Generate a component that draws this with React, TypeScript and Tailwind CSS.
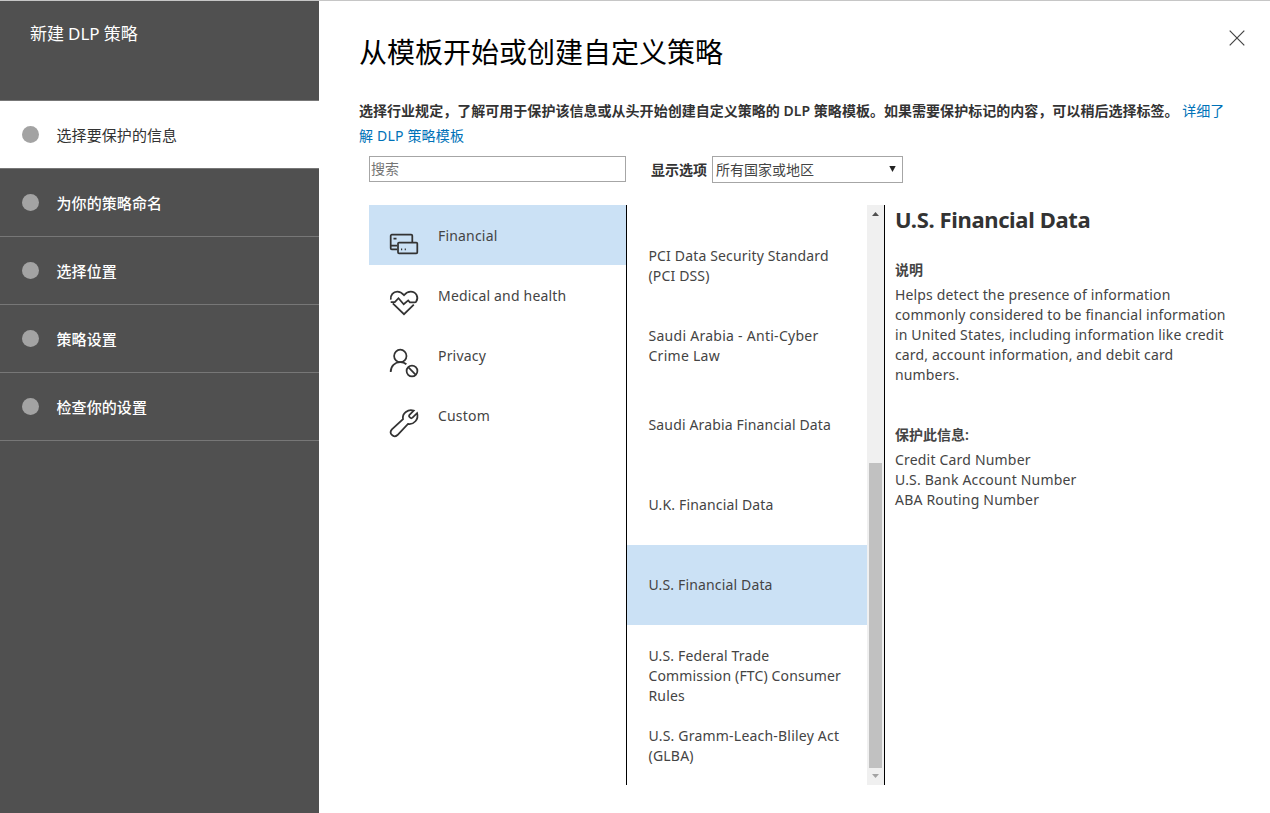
import type { ReactNode } from "react";

const steps = ["选择要保护的信息", "为你的策略命名", "选择位置", "策略设置", "检查你的设置"];

const icons: Record<string, ReactNode> = {
  Financial: (
    <>
      <path d="M22.3 12V5.8a1.100 1.100 0 0 0-1.100-1.100H1.800A1.100 1.100 0 0 0 .7 5.800v12.400a1.100 1.100 0 0 0 1.100 1.100H7M.7 15.700H7M3.500 8.500h3" />
      <rect x="8" y="12.500" width="19.300" height="10.800" rx="1" />
      <path d="M11 19.300h1.200M14.700 19.300h1.200" />
    </>
  ),
  "Medical and health": (
    <>
      <path d="M.8 9.600C.2 5 3.400 1.700 7.200 1.700 10 1.700 11.900 2.800 14 5.200c2-2.400 3.900-3.500 6.800-3.500 5.300 0 8.300 5.600 5.400 9.900-.4.500-.8.700-1.400.700H19.900l-1.700-1.900-4.500 3.800-5.200-6-3.700 4H.7" />
      <path d="M2.800 13.300 14 24.200l9.800-9.500" />
    </>
  ),
  Privacy: (
    <>
      <circle cx="10.300" cy="5.900" r="6.200" />
      <path d="M.7 21.900c0-5.700 4.100-9.700 9.600-9.700 2.600 0 4.400.7 6.100 2" />
      <circle cx="22" cy="21" r="5.400" />
      <path d="m18.200 17.200 7.600 7.600" />
    </>
  ),
  Custom: (
    <path d="M23.700.7c-5.600-1.900-11.800 2.700-10.700 8.500L1.900 19.300c-3.500 4 1.600 9.200 5.600 5.700L18 13.900c5.800.9 11-4.500 9.100-10.700l-4.600 4.500c-.7.600-1.700.600-2.300 0l-.7-.7c-.6-.6-.6-1.500 0-2.100z" />
  ),
};

const categories = ["Financial", "Medical and health", "Privacy", "Custom"];

const templates = [
  { text: "PCI Data Security Standard (PCI DSS)", pad: "pt-[21px]" },
  { text: "Saudi Arabia - Anti-Cyber Crime Law", pad: "pt-[21px] tracking-[0.270px]" },
  { text: "Saudi Arabia Financial Data", pad: "pt-[30px]" },
  { text: "U.K. Financial Data", pad: "pt-[30px]" },
  { text: "U.S. Financial Data", pad: "pt-[30px]", active: true },
  { text: "U.S. Federal Trade Commission (FTC) Consumer Rules", pad: "pt-[21px]" },
  { text: "U.S. Gramm-Leach-Bliley Act (GLBA)", pad: "pt-[21px] tracking-[0.210px]" },
];

function Sidebar() {
  return (
    <aside className="w-[319px] shrink-0 bg-[#505050] text-white">
      <div className="h-[100px] border-b border-[#777] pt-[21px] pl-[30px] text-[17px] leading-[24px] tracking-[-0.100px]">新建 DLP 策略</div>
      {steps.map((step, i) => (
        <div
          key={step}
          className={`flex h-[68px] items-center border-b border-[#777] pl-[22px] text-[15px] tracking-[0.080px] ${
            i === 0 ? "bg-white text-[#333]" : "font-medium"
          }`}
        >
          <span className="mr-[17.500px] size-[17px] rounded-full bg-[#a3a3a3]" />
          <span className="pt-[2px]">{step}</span>
        </div>
      ))}
    </aside>
  );
}

function Categories() {
  return (
    <div className="w-[257px]">
      {categories.map((name, i) => (
        <div key={name} className={`flex h-[60px] pl-[21px] ${i === 0 ? "bg-[#cbe1f5]" : ""}`}>
          <svg
            className="mt-[25px] size-[28px] overflow-visible"
            viewBox="0 0 28 28"
            fill="none"
            stroke="#333"
            strokeWidth="1.750"
          >
            {icons[name]}
          </svg>
          <span className="ml-[20px] pt-[21px] leading-[20px] tracking-[0.180px]">{name}</span>
        </div>
      ))}
    </div>
  );
}

function Templates() {
  return (
    <div className="flex w-[259px] border-x border-black">
      <div className="w-[240px] pt-[20px]">
        {templates.map((t) => (
          <div
            key={t.text}
            className={`h-[80px] pr-[20px] pl-[21.500px] leading-[20px] ${t.pad.includes("tracking") ? "" : "tracking-[0.150px]"} ${t.pad} ${t.active ? "bg-[#cbe1f5]" : ""}`}
          >
            {t.text}
          </div>
        ))}
      </div>
      <div className="flex flex-1 flex-col items-center bg-[#f0f0f0]">
        <svg className="h-[17px] w-[17px]" viewBox="0 0 17 17">
          <path d="M5 11h7L8.500 7z" fill="#505050" />
        </svg>
        <div className="mt-[241px] h-[305px] w-[13px] bg-[#c1c1c1]" />
        <svg className="h-[17px] w-[17px]" viewBox="0 0 17 17">
          <path d="M5 6h7L8.500 10z" fill="#a3a3a3" />
        </svg>
      </div>
    </div>
  );
}

function Details() {
  return (
    <div className="w-[345px] pl-[10px] leading-[20px]">
      <h2 className="text-[22px] leading-[30px] font-bold tracking-[-0.370px] text-[#333]">
        <span className="relative -top-px">U.S. Financial Data</span>
      </h2>
      <h3 className="mt-[25px] leading-[20px] font-semibold">说明</h3>
      <p className="mt-[5px] tracking-[0.150px]">
        Helps detect the presence of information
        <br />
        commonly considered to be financial information
        <br />
        in United States, including information like credit
        <br />
        card, account information, and debit card
        <br />
        numbers.
      </p>
      <h3 className="mt-[40px] font-semibold">保护此信息:</h3>
      <ul className="mt-[5px] tracking-[0.190px]">
        <li>Credit Card Number</li>
        <li>U.S. Bank Account Number</li>
        <li>ABA Routing Number</li>
      </ul>
    </div>
  );
}

export default function App() {
  return (
    <div className="flex h-[813px] w-[1270px] overflow-hidden border-t border-[#c6c6c6] bg-white font-['Noto_Sans','Noto_Sans_CJK_SC',sans-serif] text-[14px] text-[#444]">
      <Sidebar />
      <main className="flex-1 pl-[40px]">
        <header className="flex items-start justify-between pr-[25px]">
          <h1 className="pt-[31px] text-[28px] leading-[40px] font-normal text-black">从模板开始或创建自定义策略</h1>
          <svg className="mt-[29px] size-[16px]" viewBox="0 0 16 16" stroke="#444" strokeWidth="1.200">
            <path d="M.7.7l14.600 14.600M15.300.7.7 15.300" />
          </svg>
        </header>
        <p className="mt-[26px] leading-[25px] whitespace-nowrap">
          <span className="font-semibold tracking-[0.030px] text-[#333]">
            选择行业规定，了解可用于保护该信息或从头开始创建自定义策略的 DLP 策略模板。如果需要保护标记的内容，可以稍后选择标签。
          </span>{" "}
          <a className="text-[#0072b8]">
            详细了
            <br />
            <span className="tracking-[0.180px]">解 DLP 策略模板</span>
          </a>
        </p>
        <div className="mt-[8px] ml-[10px] flex">
          <div className="h-[26px] w-[257px] border border-[#a6a6a6] pl-[1px] leading-[24px] text-[#757575]">搜索</div>
          <span className="ml-[25px] leading-[27px] font-semibold text-[#333]">显示选项</span>
          <div className="ml-[5px] flex h-[27px] w-[191px] items-center justify-between border border-[#a6a6a6] pr-[6px] pl-[3px]">
            <span>所有国家或地区</span>
            <svg className="mb-[2px] h-[6px] w-[7px]" viewBox="0 0 7 6">
              <path d="M.3 0h6.400L3.500 6z" fill="#222" />
            </svg>
          </div>
        </div>
        <div className="mt-[22px] ml-[10px] flex h-[580px]">
          <Categories />
          <Templates />
          <Details />
        </div>
      </main>
    </div>
  );
}
